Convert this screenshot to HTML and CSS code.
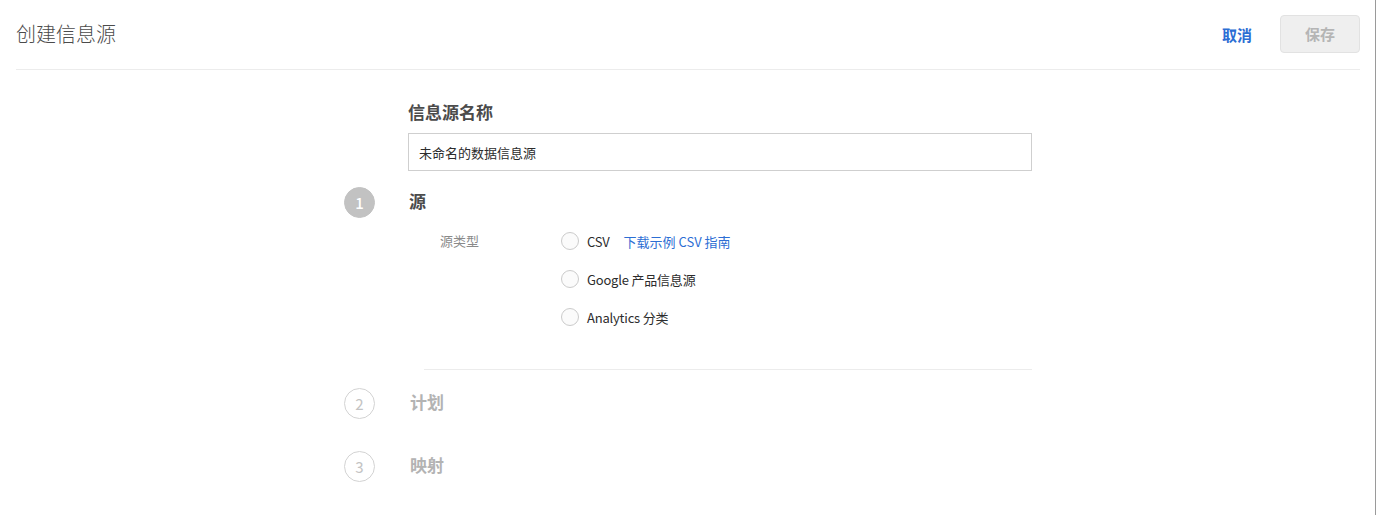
FILE: index.html
```html
<!DOCTYPE html>
<html lang="zh-CN">
<head>
<meta charset="utf-8">
<title>创建信息源</title>
<link rel="stylesheet" href="styles.css">
</head>
<body>
<div class="page">
  <header class="header">
    <h1 class="title">创建信息源</h1>
    <div class="actions">
      <a class="cancel" href="#">取消</a>
      <button class="save" disabled>保存</button>
    </div>
  </header>

  <main class="main">
    <section class="name-section">
      <h2 class="field-title">信息源名称</h2>
      <input class="name-input" type="text" value="未命名的数据信息源">
    </section>

    <section class="step">
      <div class="step-head">
        <span class="step-num active">1</span>
        <h3 class="step-title">源</h3>
      </div>
      <div class="step-body">
        <div class="source-type">
          <div class="label">源类型</div>
          <div class="options">
            <label class="option"><span class="radio"></span><span class="opt-text">CSV</span><a class="link" href="#">下载示例 CSV 指南</a></label>
            <label class="option"><span class="radio"></span><span class="opt-text">Google 产品信息源</span></label>
            <label class="option"><span class="radio"></span><span class="opt-text">Analytics 分类</span></label>
          </div>
        </div>
        <div class="divider"></div>
      </div>
    </section>

    <section class="step step-2">
      <div class="step-head">
        <span class="step-num">2</span>
        <h3 class="step-title muted">计划</h3>
      </div>
    </section>

    <section class="step step-3">
      <div class="step-head">
        <span class="step-num">3</span>
        <h3 class="step-title muted">映射</h3>
      </div>
    </section>
  </main>
</div>
<div class="edge"></div>
</body>
</html>
```

FILE: styles.css
```css
* { box-sizing: border-box; }
html, body { margin: 0; padding: 0; background: #fff; }
body {
  font-family: "Noto Sans CJK SC", "Noto Sans", sans-serif;
  color: #4b4b4b;
  width: 1377px;
  height: 515px;
  overflow: hidden;
  position: relative;
}
.page { margin: 0 17px 0 16px; }

.header {
  height: 70px;
  border-bottom: 1px solid #ececec;
  display: flex;
  align-items: center;
  justify-content: space-between;
  padding-bottom: 1px;
}
.title {
  margin: 0;
  font-size: 20px;
  font-weight: 300;
  color: #4b4b4b;
  line-height: 24px;
}
.actions { display: flex; align-items: center; gap: 28px; }
.cancel {
  color: #2c6ed4;
  font-size: 15px;
  font-weight: 700;
  text-decoration: none;
}
.save {
  width: 80px;
  height: 38px;
  border: 1px solid #e2e2e2;
  border-radius: 4px;
  background: #efefef;
  color: #b5b5b5;
  font-family: inherit;
  font-size: 15px;
  font-weight: 700;
  margin-top: -1px;
}

.main { width: 688px; margin: 0 auto; }

.name-section { padding-left: 64px; padding-top: 30px; }
.field-title {
  margin: 0;
  font-size: 17px;
  line-height: 24px;
  font-weight: 700;
  color: #4b4b4b;
}
.name-input {
  display: block;
  margin-top: 9px;
  width: 624px;
  height: 38px;
  border: 1px solid #cfcfcf;
  border-radius: 0;
  padding: 0 10px;
  font-family: inherit;
  font-size: 13px;
  color: #2c2c2c;
  outline: none;
}

.step { margin-top: 16px; }
.step-head { display: flex; align-items: center; height: 30px; }
.step-num {
  width: 31px;
  height: 31px;
  border-radius: 50%;
  border: 1px solid #d3d3d3;
  color: #c3c3c3;
  font-size: 15px;
  display: flex;
  align-items: center;
  justify-content: center;
  flex: none;
  margin-right: 34px;
}
.step-num.active { background: #c2c2c2; border-color: #c2c2c2; color: #fff; font-weight: 500; }
.step-title {
  margin: -2px 0 0;
  font-size: 17px;
  font-weight: 700;
  color: #4b4b4b;
  line-height: 24px;
}
.step-title.muted { color: #b3b3b3; margin-left: 1px; }

.step-body { padding-left: 64px; }
.source-type {
  display: flex;
  padding-left: 32px;
  margin-top: 5px;
}
.label {
  width: 121px;
  font-size: 13px;
  color: #8a8a8a;
  line-height: 38px;
}
.options { display: flex; flex-direction: column; }
.option {
  display: flex;
  align-items: center;
  height: 38px;
  font-size: 13px;
  color: #2c2c2c;
}
.opt-text { letter-spacing: -0.2px; }
.radio {
  width: 18px;
  height: 18px;
  border-radius: 50%;
  border: 1px solid #cbcbcb;
  background: #fbfbfb;
  margin-right: 8px;
  flex: none;
}
.link {
  color: #2c6ed4;
  text-decoration: none;
  margin-left: 14px;
}
.divider {
  margin-top: 33px;
  margin-left: 16px;
  border-top: 1px solid #ececec;
}

.step-2 { margin-top: 18px; }
.step-3 { margin-top: 33px; }

.edge {
  position: absolute;
  top: 0;
  right: 1px;
  width: 1px;
  height: 515px;
  background: #9a9a9a;
}
```
